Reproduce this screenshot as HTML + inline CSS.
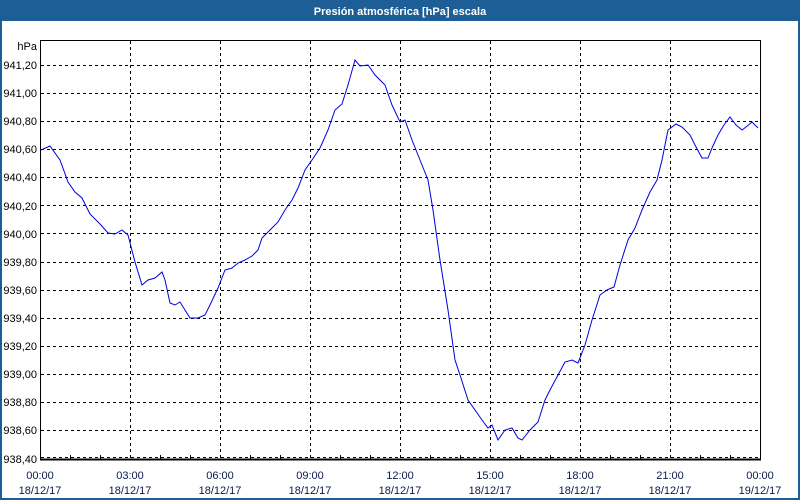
<!DOCTYPE html>
<html><head><meta charset="utf-8"><style>
html,body{margin:0;padding:0;width:800px;height:500px;overflow:hidden;background:#fff}
svg{display:block}
text{font-family:"Liberation Sans",sans-serif;font-size:11px}
</style></head><body>
<svg width="800" height="500" xmlns="http://www.w3.org/2000/svg">
<rect x="0" y="0" width="800" height="500" fill="#fff"/>
<rect x="0" y="0" width="800" height="21" fill="#1d5e96"/>
<rect x="0" y="0" width="2" height="500" fill="#1d5e96"/>
<rect x="798" y="0" width="2" height="500" fill="#1d5e96"/>
<rect x="0" y="498" width="800" height="2" fill="#1d5e96"/>
<text x="400" y="15" text-anchor="middle" fill="#fff" font-weight="bold" font-size="12">Presión atmosférica [hPa] escala</text>
<g stroke="#000" stroke-width="1" stroke-dasharray="3,3" fill="none">
<path d="M130.5 41V459M220.5 41V459M310.5 41V459M400.5 41V459M490.5 41V459M580.5 41V459M670.5 41V459"/>
<path d="M41 65.5H760M41 93.5H760M41 121.5H760M41 149.5H760M41 177.5H760M41 205.5H760M41 233.5H760M41 262.5H760M41 290.5H760M41 318.5H760M41 346.5H760M41 374.5H760M41 402.5H760M41 430.5H760M41 457.5H760"/>
</g>
<rect x="40.5" y="40.5" width="720" height="419" fill="none" stroke="#000"/>
<line x1="40" y1="459.5" x2="761" y2="459.5" stroke="#000" stroke-width="2"/>
<g stroke="#000"><path d="M70.5 455V459M100.5 455V459M160.5 455V459M190.5 455V459M250.5 455V459M280.5 455V459M340.5 455V459M370.5 455V459M430.5 455V459M460.5 455V459M520.5 455V459M550.5 455V459M610.5 455V459M640.5 455V459M700.5 455V459M730.5 455V459"/></g>
<g fill="#000" text-anchor="end">
<text x="37" y="50">hPa</text>
<text x="37" y="69">941,20</text><text x="37" y="97">941,00</text><text x="37" y="125">940,80</text><text x="37" y="153">940,60</text><text x="37" y="181">940,40</text><text x="37" y="210">940,20</text><text x="37" y="238">940,00</text><text x="37" y="266">939,80</text><text x="37" y="294">939,60</text><text x="37" y="322">939,40</text><text x="37" y="350">939,20</text><text x="37" y="378">939,00</text><text x="37" y="406">938,80</text><text x="37" y="434">938,60</text><text x="37" y="463">938,40</text>
</g>
<g fill="#0a1a4a" text-anchor="middle">
<text x="40" y="479">00:00</text><text x="40" y="494">18/12/17</text>
<text x="130" y="479">03:00</text><text x="130" y="494">18/12/17</text>
<text x="220" y="479">06:00</text><text x="220" y="494">18/12/17</text>
<text x="310" y="479">09:00</text><text x="310" y="494">18/12/17</text>
<text x="400" y="479">12:00</text><text x="400" y="494">18/12/17</text>
<text x="490" y="479">15:00</text><text x="490" y="494">18/12/17</text>
<text x="580" y="479">18:00</text><text x="580" y="494">18/12/17</text>
<text x="670" y="479">21:00</text><text x="670" y="494">18/12/17</text>
<text x="760" y="479">00:00</text><text x="760" y="494">19/12/17</text>
</g>
<polyline fill="none" stroke="#0000e0" stroke-width="1" points="41,150 50,146 60,160 68,182 75,192 82,198 90,214 100,224 108,233 115,234 122,230 128,235 135,262 142,285 148,280 155,278 162,272 165,280 170,303 175,305 180,302 185,310 190,318 198,318 205,315 210,305 218,288 225,270 232,268 238,263 245,260 252,256 258,250 262,238 270,230 278,222 285,210 292,200 298,188 305,170 312,160 320,148 328,130 335,110 342,104 348,85 355,60 360,66 368,65 375,75 385,85 392,105 400,122 405,120 412,140 420,160 428,180 433,210 440,260 448,310 455,360 460,375 468,400 475,410 482,420 488,428 492,425 498,440 505,430 512,428 518,438 522,440 530,430 538,422 545,400 550,390 558,375 565,362 572,360 578,363 585,345 592,320 600,295 607,290 614,287 620,265 628,240 635,228 642,210 650,192 657,180 662,160 668,130 676,124 682,127 690,135 695,145 702,158 708,158 712,148 718,135 724,125 730,117 736,125 742,130 746,127 752,122 758,128"/>
</svg>
</body></html>
